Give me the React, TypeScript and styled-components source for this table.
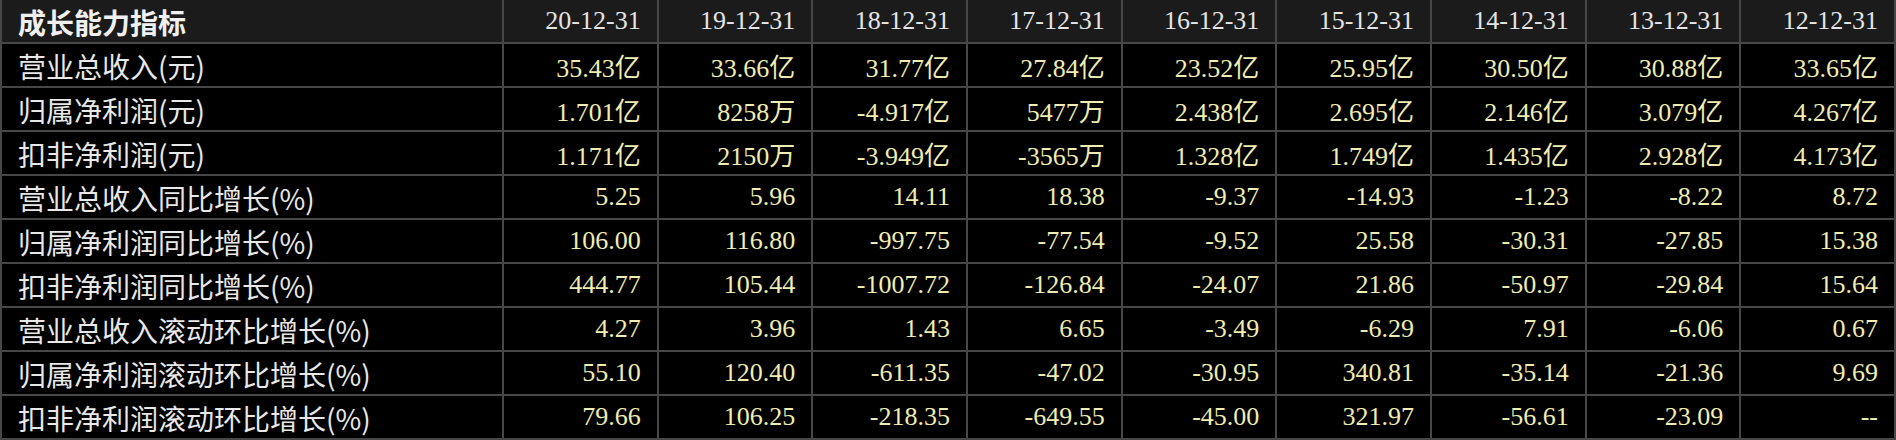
import React from 'react';
import styled, { createGlobalStyle } from 'styled-components';

const GRID_LINE = '#474747';

const GlobalStyle = createGlobalStyle`
  html, body {
    margin: 0;
    padding: 0;
    background: #000;
  }
`;

const Table = styled.div`
  display: grid;
  grid-template-columns: 500px repeat(9, 1fr);
  grid-auto-rows: 42px;
  gap: 2px;
  width: 1896px;
  box-sizing: border-box;
  padding: 0 2px 2px 2px;
  background: ${GRID_LINE};
`;

const Row = styled.div`
  display: contents;
`;

const Cell = styled.div<{ $head?: boolean }>`
  display: flex;
  align-items: center;
  justify-content: flex-end;
  padding: 0 16px;
  background: ${({ $head }) => ($head ? '#1b1b1b' : '#000')};
  overflow: hidden;
  white-space: nowrap;
`;

const LabelCell = styled(Cell)`
  justify-content: flex-start;
  font-family: 'Noto Sans CJK SC', 'Noto Sans', sans-serif;
  font-size: 28px;
  font-weight: ${({ $head }) => ($head ? 700 : 400)};
  color: ${({ $head }) => ($head ? '#f0f0f0' : '#e8e8e8')};
  padding-top: 2px;
`;

const DateCell = styled(Cell)`
  font-family: 'Liberation Serif', 'Noto Sans CJK SC', serif;
  font-size: 26px;
  color: #e4e4e4;
`;

const ValueCell = styled(Cell)`
  font-family: 'Liberation Serif', 'Noto Sans CJK SC', serif;
  font-size: 26px;
  color: #efedb2;
`;

const dates = [
  '20-12-31', '19-12-31', '18-12-31', '17-12-31', '16-12-31',
  '15-12-31', '14-12-31', '13-12-31', '12-12-31',
];

const rows: [string, string[]][] = [
  ['营业总收入(元)', ['35.43亿', '33.66亿', '31.77亿', '27.84亿', '23.52亿', '25.95亿', '30.50亿', '30.88亿', '33.65亿']],
  ['归属净利润(元)', ['1.701亿', '8258万', '-4.917亿', '5477万', '2.438亿', '2.695亿', '2.146亿', '3.079亿', '4.267亿']],
  ['扣非净利润(元)', ['1.171亿', '2150万', '-3.949亿', '-3565万', '1.328亿', '1.749亿', '1.435亿', '2.928亿', '4.173亿']],
  ['营业总收入同比增长(%)', ['5.25', '5.96', '14.11', '18.38', '-9.37', '-14.93', '-1.23', '-8.22', '8.72']],
  ['归属净利润同比增长(%)', ['106.00', '116.80', '-997.75', '-77.54', '-9.52', '25.58', '-30.31', '-27.85', '15.38']],
  ['扣非净利润同比增长(%)', ['444.77', '105.44', '-1007.72', '-126.84', '-24.07', '21.86', '-50.97', '-29.84', '15.64']],
  ['营业总收入滚动环比增长(%)', ['4.27', '3.96', '1.43', '6.65', '-3.49', '-6.29', '7.91', '-6.06', '0.67']],
  ['归属净利润滚动环比增长(%)', ['55.10', '120.40', '-611.35', '-47.02', '-30.95', '340.81', '-35.14', '-21.36', '9.69']],
  ['扣非净利润滚动环比增长(%)', ['79.66', '106.25', '-218.35', '-649.55', '-45.00', '321.97', '-56.61', '-23.09', '--']],
];

export default function App() {
  return (
    <>
      <GlobalStyle />
      <Table>
        <Row>
          <LabelCell $head>成长能力指标</LabelCell>
          {dates.map((d) => (
            <DateCell $head key={d}>{d}</DateCell>
          ))}
        </Row>
        {rows.map(([label, values]) => (
          <Row key={label}>
            <LabelCell>{label}</LabelCell>
            {values.map((v, i) => (
              <ValueCell key={i}>{v}</ValueCell>
            ))}
          </Row>
        ))}
      </Table>
    </>
  );
}
